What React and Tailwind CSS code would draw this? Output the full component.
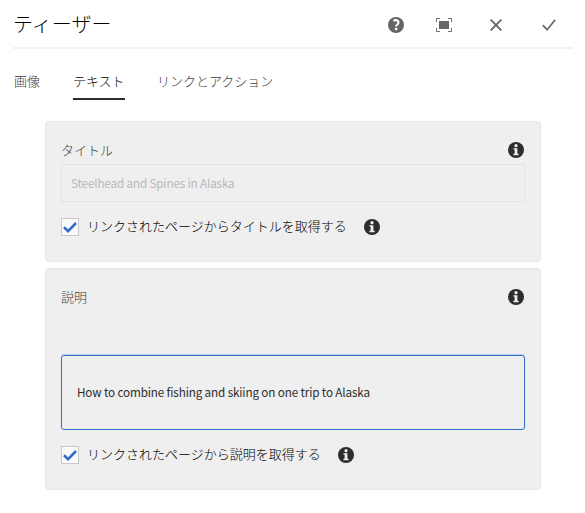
import React from "react";

function InfoIcon() {
  return (
    <svg className="block size-4 shrink-0" viewBox="0 0 16 16">
      <circle cx="8" cy="8" r="8" fill="#2d2d2d" />
      <circle cx="8" cy="3.7" r="1.6" fill="#efefef" />
      <path d="M5.4 6.2h4v5.6h1.2v1.4H5.4v-1.4h1.2V7.6H5.4z" fill="#efefef" />
    </svg>
  );
}

function HelpIcon() {
  return (
    <svg className="block size-4" viewBox="0 0 16 16">
      <circle cx="8" cy="8" r="8" fill="#666" />
      <path d="M5.5 3.9C7.5 2.5 10.5 3 10.5 5.4c0 2-2.4 2.1-2.4 4.2" fill="none" stroke="#fff" strokeWidth="2.1" />
      <rect x="6.9" y="10.8" width="2.4" height="2.4" rx="0.7" fill="#fff" />
    </svg>
  );
}

function FullscreenIcon() {
  return (
    <svg className="block h-[14px] w-4" viewBox="0 0 16 14">
      <path d="M.5 4V.5H4M12 .5h3.5V4M15.5 10v3.5H12M4 13.5H.5V10" fill="none" stroke="#707070" />
      <rect x="3" y="3" width="10" height="8" fill="#666" />
    </svg>
  );
}

function CloseIcon() {
  return (
    <svg className="block size-3" viewBox="0 0 12 12">
      <path d="M.7.7l10.6 10.6M11.3.7L.7 11.3" stroke="#666" strokeWidth="1.9" />
    </svg>
  );
}

function DoneIcon() {
  return (
    <svg className="block h-3 w-[14px]" viewBox="0 0 14 12">
      <path d="M.8 6.2l4.3 4.5L13.2.7" fill="none" stroke="#666" strokeWidth="1.7" />
    </svg>
  );
}

function CheckRow({ label }) {
  return (
    <div className="flex h-[18px] items-center">
      <span className="flex size-[18px] shrink-0 items-center justify-center border border-[#c8c8c8] bg-[#fafafa]">
        <svg className="block h-[11px] w-[14px]" viewBox="0 0 14 11">
          <path d="M1 5.2l4.1 4L13 1" fill="none" stroke="#326ec8" strokeWidth="2.6" />
        </svg>
      </span>
      <span className="ml-2 whitespace-nowrap pb-[2px] text-[13px] leading-4 text-black">{label}</span>
      <span className="ml-[17px]">
        <InfoIcon />
      </span>
    </div>
  );
}

function FieldHeader({ label }) {
  return (
    <div className="flex h-4 items-center justify-between pr-px text-[13px] leading-4 text-[#3c3c3c]">
      <span>{label}</span>
      <InfoIcon />
    </div>
  );
}

export default function App() {
  return (
    <div className="h-[513px] w-[585px] overflow-hidden bg-white font-['Noto_Sans_CJK_JP','Noto_Sans',sans-serif] font-light">
      <header className="ml-[13px] flex h-[49px] w-[560px] items-center border-b-2 border-[#f1f1f1] pt-[2px]">
        <h1 className="flex-1 pb-[2px] text-[20px] font-light leading-6 text-black">ティーザー</h1>
        <div className="flex items-center pr-[17px]">
          <HelpIcon />
          <span className="ml-8"><FullscreenIcon /></span>
          <span className="ml-[38px]"><CloseIcon /></span>
          <span className="ml-10"><DoneIcon /></span>
        </div>
      </header>

      <nav className="ml-[14px] mt-[15px] flex gap-8 text-[13px] leading-[33px] text-[#3c3c3c]">
        <span className="h-9 w-[27px]">画像</span>
        <span className="h-9 w-[52px] border-b-2 border-[#2d2d2d] text-black">テキスト</span>
        <span className="h-9">リンクとアクション</span>
      </nav>

      <main className="ml-[45px] mt-[21px] flex w-[496px] flex-col gap-[6px]">
        <section className="h-[141px] rounded border border-[#e6e6e6] bg-[#efefef] px-[15px] pt-5">
          <FieldHeader label="タイトル" />
          <div className="mt-[6px] flex h-[38px] items-center border border-[#e3e3e3] px-[9px] text-[11.7px] font-normal tracking-[-0.15px] text-[#b8b8b8]">
            Steelhead and Spines in Alaska
          </div>
          <div className="mt-4">
            <CheckRow label="リンクされたページからタイトルを取得する" />
          </div>
        </section>

        <section className="h-[222px] rounded border border-[#e6e6e6] bg-[#efefef] px-[15px] pt-5">
          <FieldHeader label="説明" />
          <div className="mt-[50px] flex h-[75px] items-center rounded-[3px] border border-[#326ec8] px-[15px] pb-px text-[11.7px] font-normal tracking-[-0.14px] text-[#2d2d2d] shadow-[0_-1px_1px_#b4cbed]">
            How to combine fishing and skiing on one trip to Alaska
          </div>
          <div className="mt-4">
            <CheckRow label="リンクされたページから説明を取得する" />
          </div>
        </section>
      </main>
    </div>
  );
}
